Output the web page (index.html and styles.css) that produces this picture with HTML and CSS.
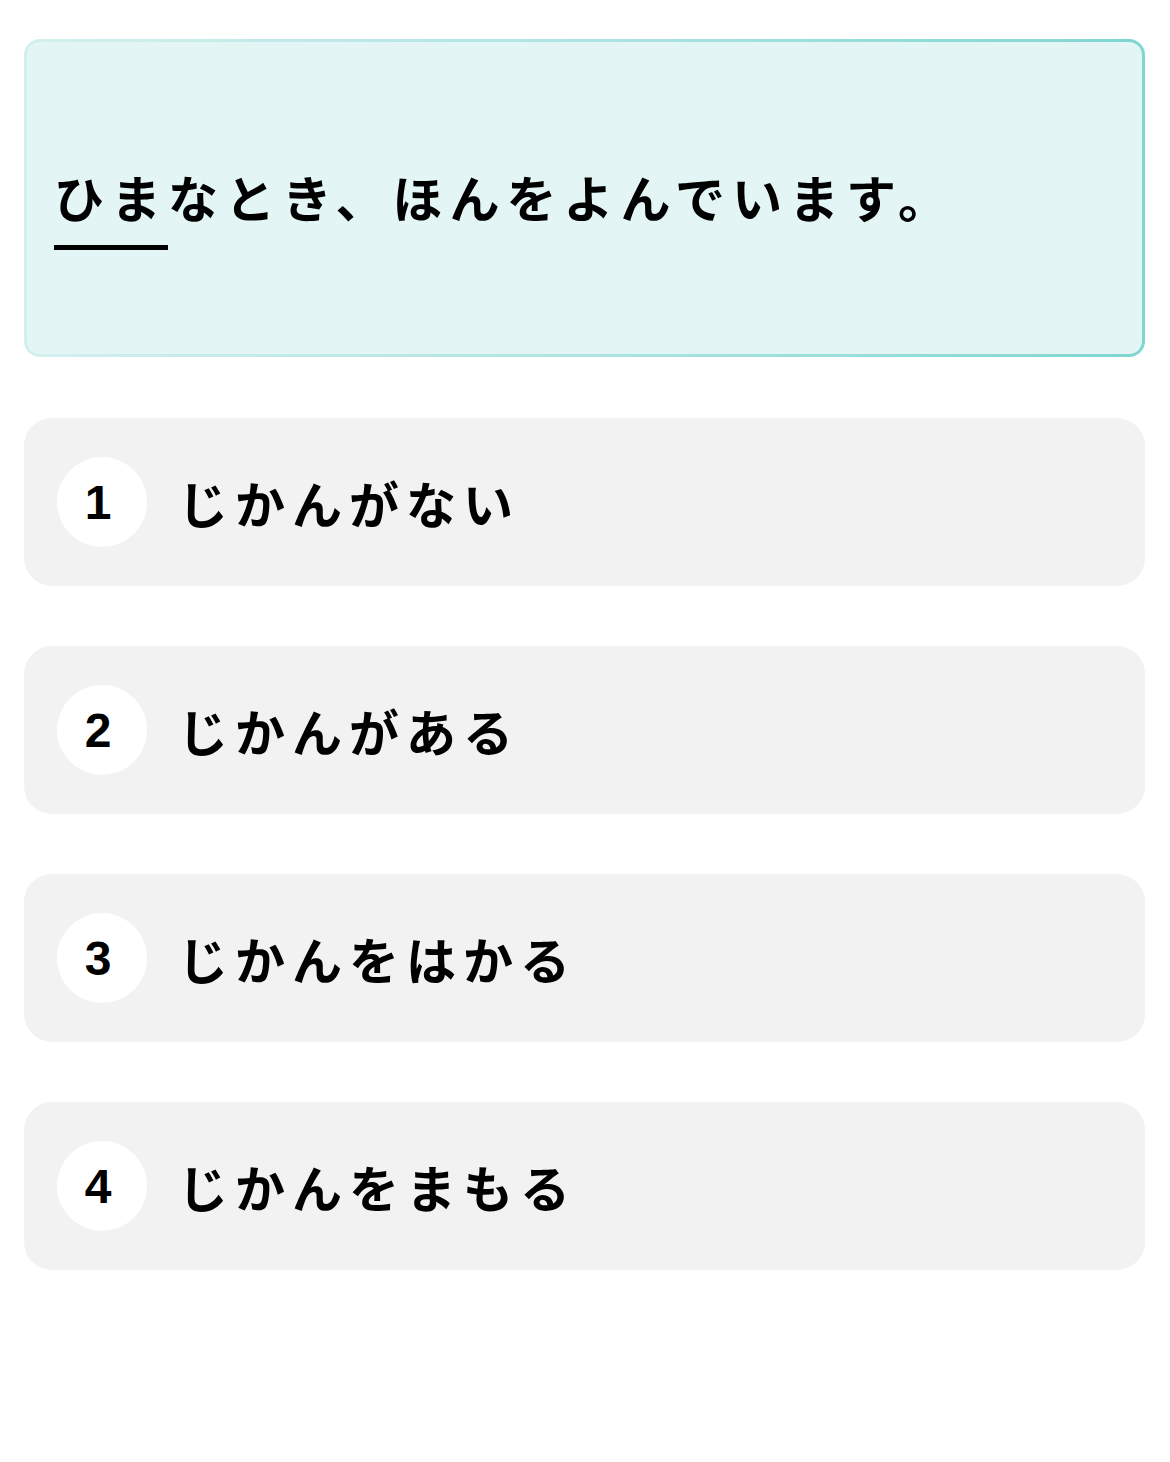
FILE: index.html
```html
<!DOCTYPE html>
<html lang="ja">
<head>
<meta charset="utf-8">
<link rel="stylesheet" href="styles.css">
</head>
<body>
<main class="quiz">
  <section class="question">
    <p class="question-text"><span class="target">ひま</span>なとき、ほんをよんでいます。</p>
  </section>
  <ol class="options">
    <li class="option"><span class="num">1</span><span class="label">じかんがない</span></li>
    <li class="option"><span class="num">2</span><span class="label">じかんがある</span></li>
    <li class="option"><span class="num">3</span><span class="label">じかんをはかる</span></li>
    <li class="option"><span class="num">4</span><span class="label">じかんをまもる</span></li>
  </ol>
</main>
</body>
</html>
```
FILE: styles.css
```css
html, body {
  margin: 0;
  padding: 0;
  background: #ffffff;
}
body {
  font-family: "Noto Sans CJK JP", "Noto Sans", sans-serif;
  color: #000;
}
.quiz {
  padding: 39px 25px 0 24px;
  display: flex;
  flex-direction: column;
  gap: 61px;
}
.question {
  height: 318px;
  box-sizing: border-box;
  border: 3px solid transparent;
  border-radius: 16px;
  background:
    linear-gradient(#e3f5f5, #e3f5f5) padding-box,
    linear-gradient(90deg, #d3efee 0%, #a9e3e0 55%, #7fd6d1 100%) border-box;
  display: flex;
  align-items: center;
  padding: 0 27px;
}
.question-text {
  margin: 0;
  font-size: 50px;
  font-weight: 700;
  letter-spacing: 7px;
  line-height: 1.4;
  position: relative;
  top: -2px;
}
.target {
  text-decoration: underline;
  text-decoration-thickness: 5px;
  text-underline-offset: 27px;
}
.options {
  list-style: none;
  margin: 0;
  padding: 0;
  display: flex;
  flex-direction: column;
  gap: 60px;
}
.option {
  height: 168px;
  background: #f2f2f2;
  border-radius: 28px;
  display: flex;
  align-items: center;
  padding-left: 33px;
  gap: 31px;
}
.num {
  width: 90px;
  height: 90px;
  box-sizing: border-box;
  padding-right: 8px;
  border-radius: 50%;
  background: #ffffff;
  display: flex;
  align-items: center;
  justify-content: center;
  font-family: "Liberation Sans", Arial, sans-serif;
  font-weight: 700;
  font-size: 48px;
  flex: none;
}
.label {
  font-size: 50px;
  font-weight: 700;
  letter-spacing: 7px;
  line-height: 1;
}
```
